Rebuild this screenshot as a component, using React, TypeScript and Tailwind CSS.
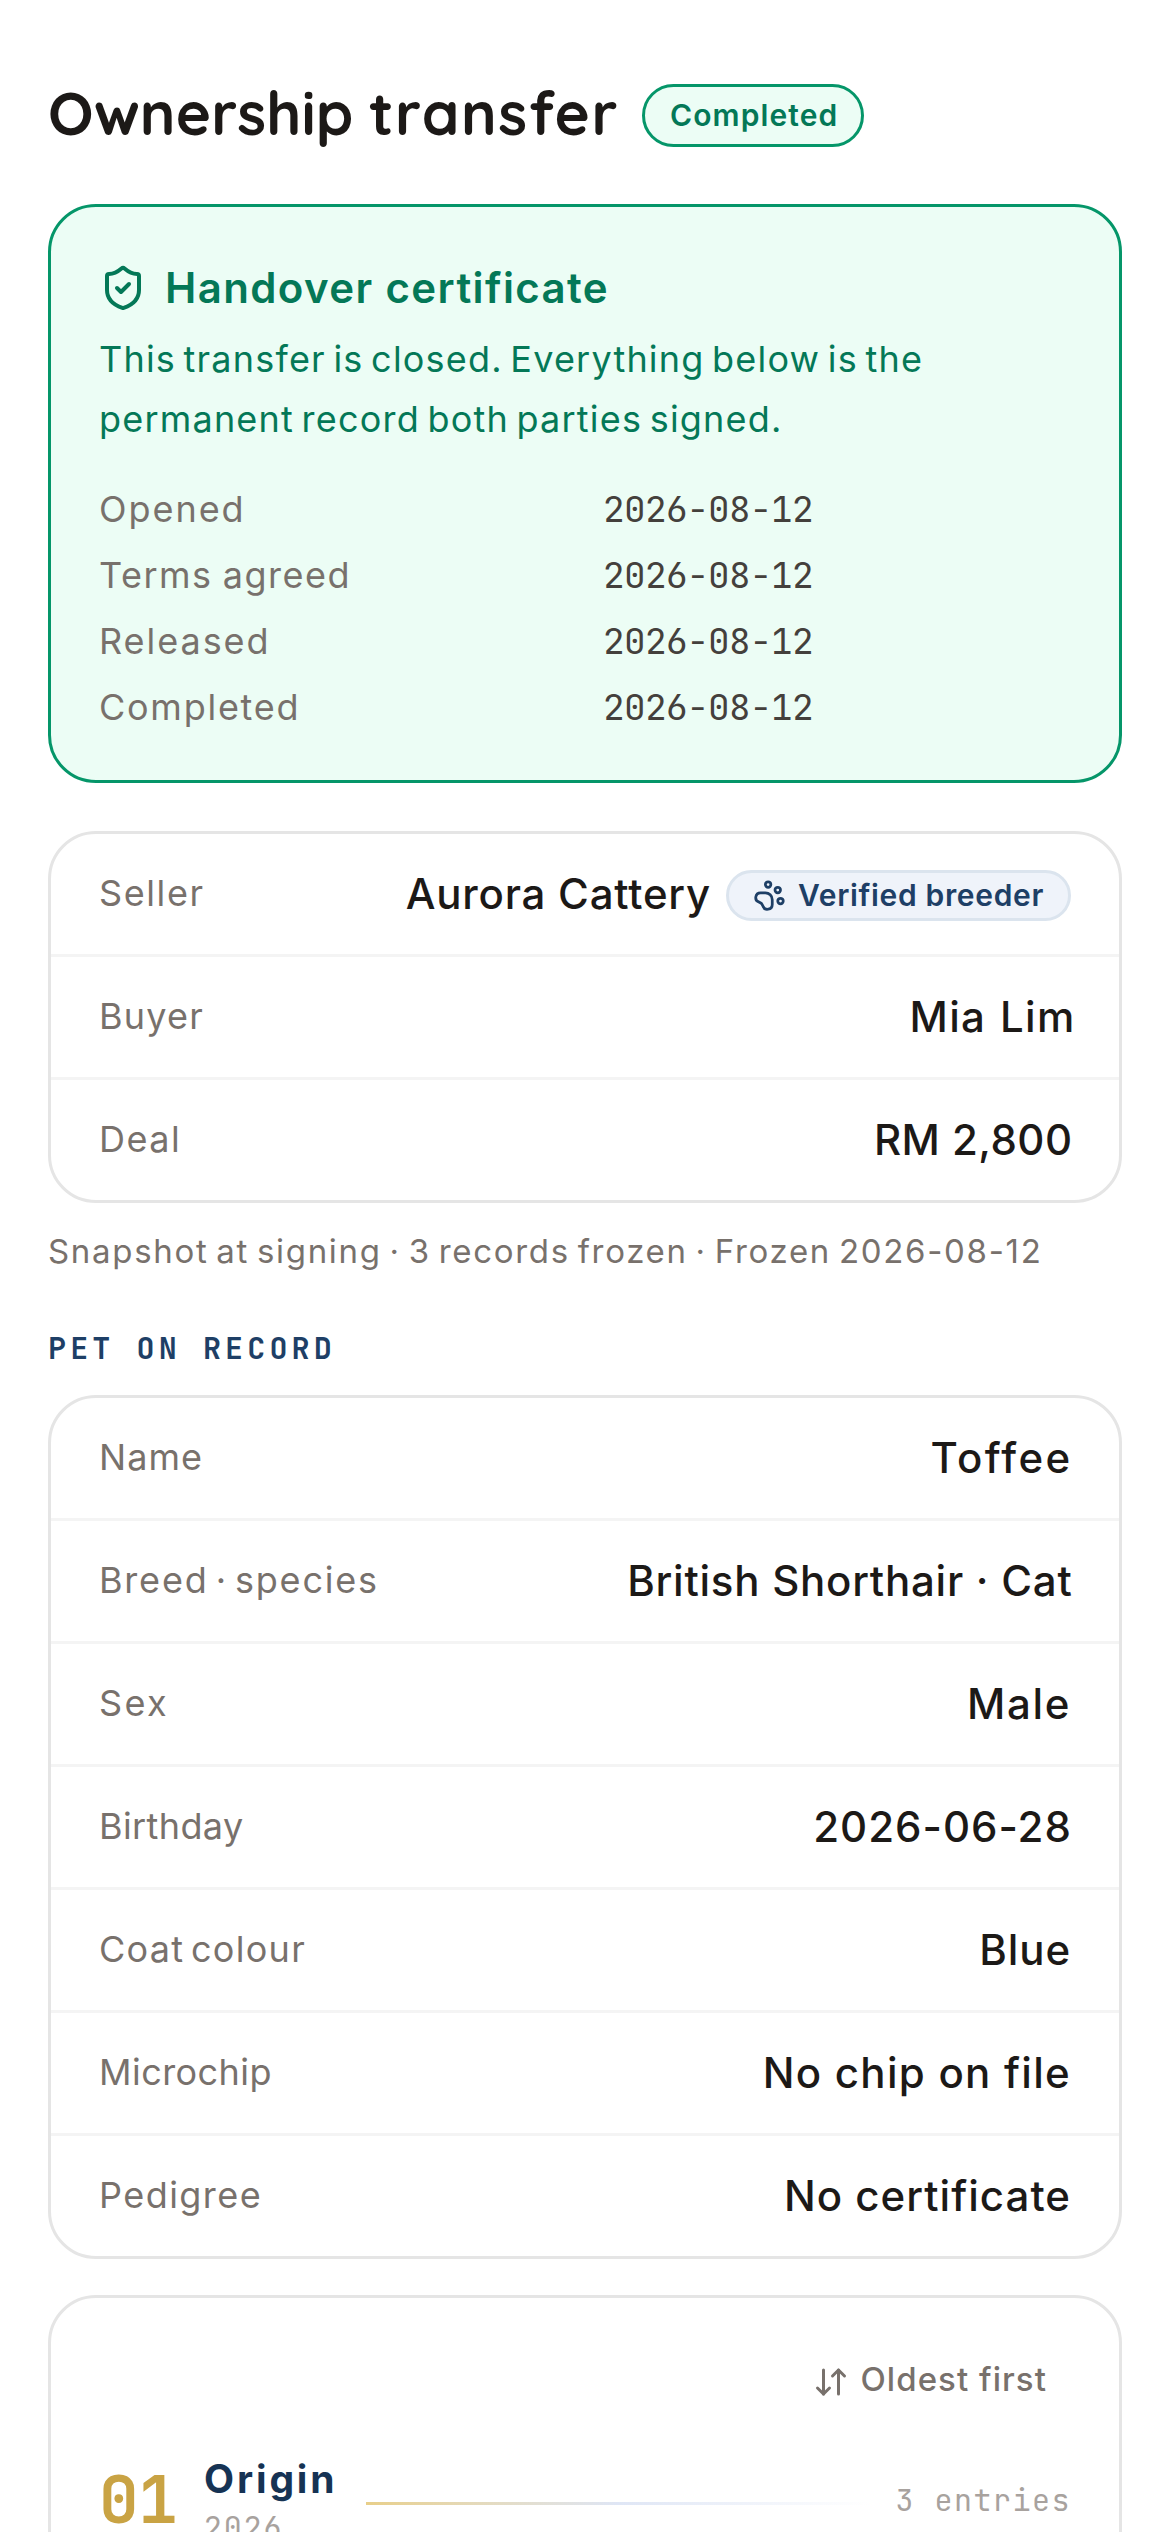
import type { ReactNode } from 'react';
import { ArrowDownUp, PawPrint, ShieldCheck } from 'lucide-react';

const milestones = [
  { label: 'Opened', date: '2026-08-12', labelClass: 'tracking-[0.65px]' },
  { label: 'Terms agreed', date: '2026-08-12', labelClass: 'tracking-[0.5px] [word-spacing:-0.5px]' },
  { label: 'Released', date: '2026-08-12', labelClass: 'tracking-[0.65px]' },
  { label: 'Completed', date: '2026-08-12', labelClass: 'tracking-[0.58px]' },
];

const petRecord = [
  { label: 'Name', value: 'Toffee', labelClass: 'tracking-[0.35px]', valueClass: 'tracking-[0.78px] -mr-[0.5px]' },
  {
    label: 'Breed · species',
    value: 'British Shorthair · Cat',
    labelClass: 'tracking-[0.6px] [word-spacing:-1.6px]',
    valueClass: 'tracking-[0.25px] -mr-[0.5px]',
  },
  { label: 'Sex', value: 'Male', labelClass: 'tracking-[0.8px]', valueClass: 'tracking-[0.55px]' },
  { label: 'Birthday', value: '2026-06-28', labelClass: 'tracking-[0.13px]', valueClass: 'tracking-[0.33px] -mr-[0.3px]' },
  {
    label: 'Coat colour',
    value: 'Blue',
    labelClass: 'tracking-[0.43px] [word-spacing:-1.6px]',
    valueClass: 'tracking-[0.3px]',
  },
  { label: 'Microchip', value: 'No chip on file', labelClass: 'tracking-[0.15px]', valueClass: 'tracking-[0.42px]' },
  { label: 'Pedigree', value: 'No certificate', labelClass: 'tracking-[0.48px]', valueClass: 'tracking-[0.34px]' },
];

interface RecordRowProps {
  label: string;
  labelClass: string;
  valueClass: string;
  children: ReactNode;
}

function RecordCard({ children }: { children: ReactNode }) {
  return (
    <dl className="divide-y divide-[#f4f4f4] overflow-hidden rounded-2xl border border-[#e5e5e5] bg-white">{children}</dl>
  );
}

function RecordRow({ label, labelClass, valueClass, children }: RecordRowProps) {
  return (
    <div className="flex h-10 items-center justify-between px-4 [&:not(:last-child)]:h-[41px]">
      <dt className={`text-xs text-[#78716c] ${labelClass}`}>{label}</dt>
      <dd className={`flex items-center gap-[5px] text-sm font-medium text-[#1c1917] ${valueClass}`}>{children}</dd>
    </div>
  );
}

export default function App() {
  return (
    // laid out on a 390pt canvas and drawn at 3x
    <div className="h-[2532px] w-[1170px] overflow-hidden bg-white">
      <main className="h-[844px] w-[390px] origin-top-left scale-[3] overflow-hidden px-4 pt-7 font-[Inter,'Liberation_Sans',sans-serif]">
        {/* header */}
        <header className="flex items-center gap-2">
          <h1 className="pb-0.5 font-[Quicksand,Lato,sans-serif] text-xl leading-[19px] font-bold tracking-[0.03px] text-[#1c1917] [word-spacing:-0.5px]">
            Ownership <span className="tracking-[0.5px]">transfer</span>
          </h1>
          <span className="flex h-[21px] items-center rounded-full border border-[#059669] bg-[#ecfdf5] px-2 text-[10px] font-semibold tracking-[0.36px] text-[#047857]">
            Completed
          </span>
        </header>

        {/* handover certificate */}
        <section className="mt-[19px] h-[193px] rounded-2xl border border-[#059669] bg-[#ecfdf5] px-4 pt-[17px]">
          <h2 className="flex h-5 items-center gap-1.5 text-sm font-semibold tracking-[0.46px] text-[#047857]">
            <ShieldCheck size={16} />
            Handover certificate
          </h2>
          <p className="mt-[3.5px] text-xs leading-5 tracking-[0.4px] text-[#047857] [word-spacing:-1.25px]">
            This transfer is closed. Everything below is the <br />
            permanent record both parties signed.
          </p>
          <dl className="mt-3 flex flex-col gap-1.5">
            {milestones.map((item) => (
              <div key={item.label} className="grid grid-cols-2 gap-3 text-xs leading-4">
                <dt className={`text-[#78716c] ${item.labelClass}`}>{item.label}</dt>
                <dd className="font-['JetBrains_Mono','Liberation_Mono',monospace] tracking-[-0.2px] text-[#44403c]">
                  {item.date}
                </dd>
              </div>
            ))}
          </dl>
        </section>

        {/* parties */}
        <div className="mt-4">
          <RecordCard>
            <RecordRow label="Seller" labelClass="tracking-[0.53px]" valueClass="tracking-[0.26px]">
              Aurora Cattery
              <span className="flex h-[17px] items-center gap-1 rounded-full border border-[#dbe4ee] bg-[#eff3fa] px-2 text-[10px] font-semibold tracking-[0.22px] text-[#1e3f66]">
                <PawPrint size={11} />
                Verified breeder
              </span>
            </RecordRow>
            <RecordRow label="Buyer" labelClass="tracking-[0.4px]" valueClass="tracking-[0.42px] [word-spacing:0.5px] -mr-[1.5px]">
              Mia Lim
            </RecordRow>
            <RecordRow label="Deal" labelClass="tracking-[0.5px]" valueClass="tracking-[0.15px] -mr-[0.5px]">
              RM 2,800
            </RecordRow>
          </RecordCard>
        </div>
        <p className="mt-2 text-[11px] leading-4 tracking-[0.56px] whitespace-nowrap text-[#78716c] [word-spacing:-1px]">
          Snapshot at signing · 3 records frozen · Frozen 2026-08-12
        </p>

        {/* pet on record */}
        <h2 className="mt-[16.5px] mb-[7.5px] font-['JetBrains_Mono','Liberation_Mono',monospace] text-[10px] leading-4 font-bold tracking-[1.38px] text-[#1e3f66] uppercase">
          Pet on record
        </h2>
        <RecordCard>
          {petRecord.map((item) => (
            <RecordRow key={item.label} label={item.label} labelClass={item.labelClass} valueClass={item.valueClass}>
              {item.value}
            </RecordRow>
          ))}
        </RecordCard>

        {/* timeline */}
        <section className="mt-3 h-[120px] rounded-2xl border border-[#e5e5e5] bg-white px-4 pt-4">
          <div className="flex justify-end">
            <button className="flex h-6 items-center gap-1 px-2 text-[11px] font-medium tracking-[0.35px] text-[#78716c]">
              <ArrowDownUp size={12} />
              <span className="pb-0.5">Oldest first</span>
            </button>
          </div>
          <div className="mt-3 flex items-center gap-[9px]">
            <span className="pb-0.5 font-['JetBrains_Mono','Liberation_Mono',monospace] text-[22px] leading-none font-bold tracking-[-0.2px] text-[#c9a344]">
              01
            </span>
            <div>
              <h3 className="text-[13px] leading-4 font-bold tracking-[0.95px] text-[#163354]">Origin</h3>
              <p className="mt-px font-['JetBrains_Mono','Liberation_Mono',monospace] text-[10px] leading-4 tracking-[0.6px] text-[#a8a29e]">
                2026
              </p>
            </div>
            <div className="ml-px h-px flex-1 bg-linear-to-r from-[#e8cf8a] via-[#dfe6f5] to-transparent" />
            <span className="pb-0.5 font-['JetBrains_Mono','Liberation_Mono',monospace] text-[10px] tracking-[0.5px] text-[#a8a29e]">
              3 entries
            </span>
          </div>
        </section>
      </main>
    </div>
  );
}
